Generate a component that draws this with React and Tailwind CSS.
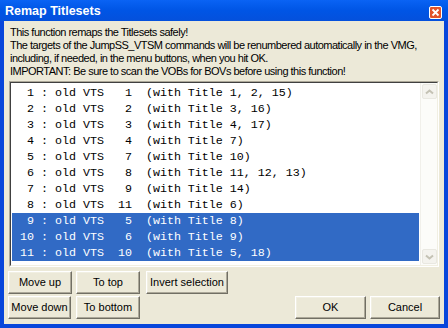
const rows = [
  [1, 1, "1, 2, 15"],
  [2, 2, "3, 16"],
  [3, 3, "4, 17"],
  [4, 4, "7"],
  [5, 7, "10"],
  [6, 8, "11, 12, 13"],
  [7, 9, "14"],
  [8, 11, "6"],
  [9, 5, "8"],
  [10, 6, "9"],
  [11, 10, "5, 18"],
];
const selected = [9, 10, 11];

const lines = [
  "This function remaps the Titlesets safely!",
  "The targets of the JumpSS_VTSM commands will be renumbered automatically in the VMG,",
  "including, if needed, in the menu buttons, when you hit OK.",
  "IMPORTANT: Be sure to scan the VOBs for BOVs before using this function!",
];

function Btn({ w, children }) {
  return (
    <button
      className={`${w} h-[23px] flex items-center justify-center bg-[#ECE9D8] border border-t-white border-l-white border-r-[#716F64] border-b-[#716F64] shadow-[inset_-1px_-1px_#ACA899,inset_1px_1px_#F1EFE2] text-[11px] text-black leading-none`}
    >
      {children}
    </button>
  );
}

function Arrow({ down }) {
  return (
    <div className="w-[15px] h-[15px] mx-auto rounded-[2px] border border-[#E9E8E1] bg-[#F4F3EE] flex items-center justify-center">
      <svg width="9" height="6" viewBox="0 0 9 6">
        <path
          d={down ? "M1 1.5 L4.5 4.5 L8 1.5" : "M1 4.5 L4.5 1.5 L8 4.5"}
          fill="none"
          stroke="#C4C2B4"
          strokeWidth="2"
        />
      </svg>
    </div>
  );
}

export default function App() {
  return (
    <div className="w-[448px] h-[328px] flex flex-col bg-[#0846DB] font-['Liberation_Sans',Arial,sans-serif] select-none">
      <div className="h-[21px] flex items-start justify-between pl-[5px] pr-[6px] bg-gradient-to-b from-[#0A63F4] via-[#0055E5] to-[#0450DC]">
        <span className="pt-[4px] text-[12.5px] leading-[14px] font-bold text-white">
          Remap Titlesets
        </span>
        <div className="mt-[6px] w-[13px] h-[13px] rounded-[2px] border border-white bg-[#E2532A] flex items-center justify-center">
          <svg width="9" height="9" viewBox="0 0 9 9">
            <path d="M1.5 1.5 L7.5 7.5 M7.5 1.5 L1.5 7.5" stroke="white" strokeWidth="1.8" />
          </svg>
        </div>
      </div>

      <div className="flex-1 mx-[4px] mb-[4px] bg-[#ECE9D8] flex flex-col px-[5px] pt-[5px]">
        <div className="text-[11px] leading-[13px] tracking-[-0.5px] text-black ml-px">
          {lines.map((l) => (
            <div key={l} className="whitespace-nowrap">
              {l}
            </div>
          ))}
        </div>

        <div className="mt-[3px] h-[186px] border border-t-[#ACA899] border-l-[#ACA899] border-r-white border-b-white">
          <div className="h-full flex border border-t-[#404040] border-l-[#404040] border-r-[#F1EFE2] border-b-[#F1EFE2] bg-white">
            <div className="flex-1 px-px pt-[2px] font-['Liberation_Mono','Courier_New',monospace] text-[11.67px] leading-[16px]">
              {rows.map(([n, vts, t]) => {
                const sel = selected.includes(n);
                return (
                  <div
                    key={n}
                    className={`h-[16px] pl-px whitespace-pre ${sel ? "bg-[#316AC5] text-white" : "text-black"}`}
                  >
                    {`${String(n).padStart(3)} : old VTS ${String(vts).padStart(3)}  (with Title ${t})`}
                  </div>
                );
              })}
            </div>
            <div className="w-[17px] flex flex-col justify-between py-px bg-[#FCFCF9] border-l border-[#F1F0EA]">
              <Arrow />
              <Arrow down />
            </div>
          </div>
        </div>

        <div className="mt-[4px] -mx-px flex">
          <div className="flex flex-col gap-[2px]">
            <div className="flex gap-[4px]">
              <Btn w="w-[64px]">Move up</Btn>
              <Btn w="w-[64px]">To top</Btn>
              <div className="ml-[2px]">
                <Btn w="w-[82px]">Invert selection</Btn>
              </div>
            </div>
            <div className="flex gap-[4px]">
              <Btn w="w-[63px]">Move down</Btn>
              <div className="ml-px">
                <Btn w="w-[64px]">To bottom</Btn>
              </div>
            </div>
          </div>
          <div className="ml-auto self-end flex gap-[4px]">
            <Btn w="w-[71px]">OK</Btn>
            <Btn w="w-[70px]">Cancel</Btn>
          </div>
        </div>
      </div>
    </div>
  );
}
